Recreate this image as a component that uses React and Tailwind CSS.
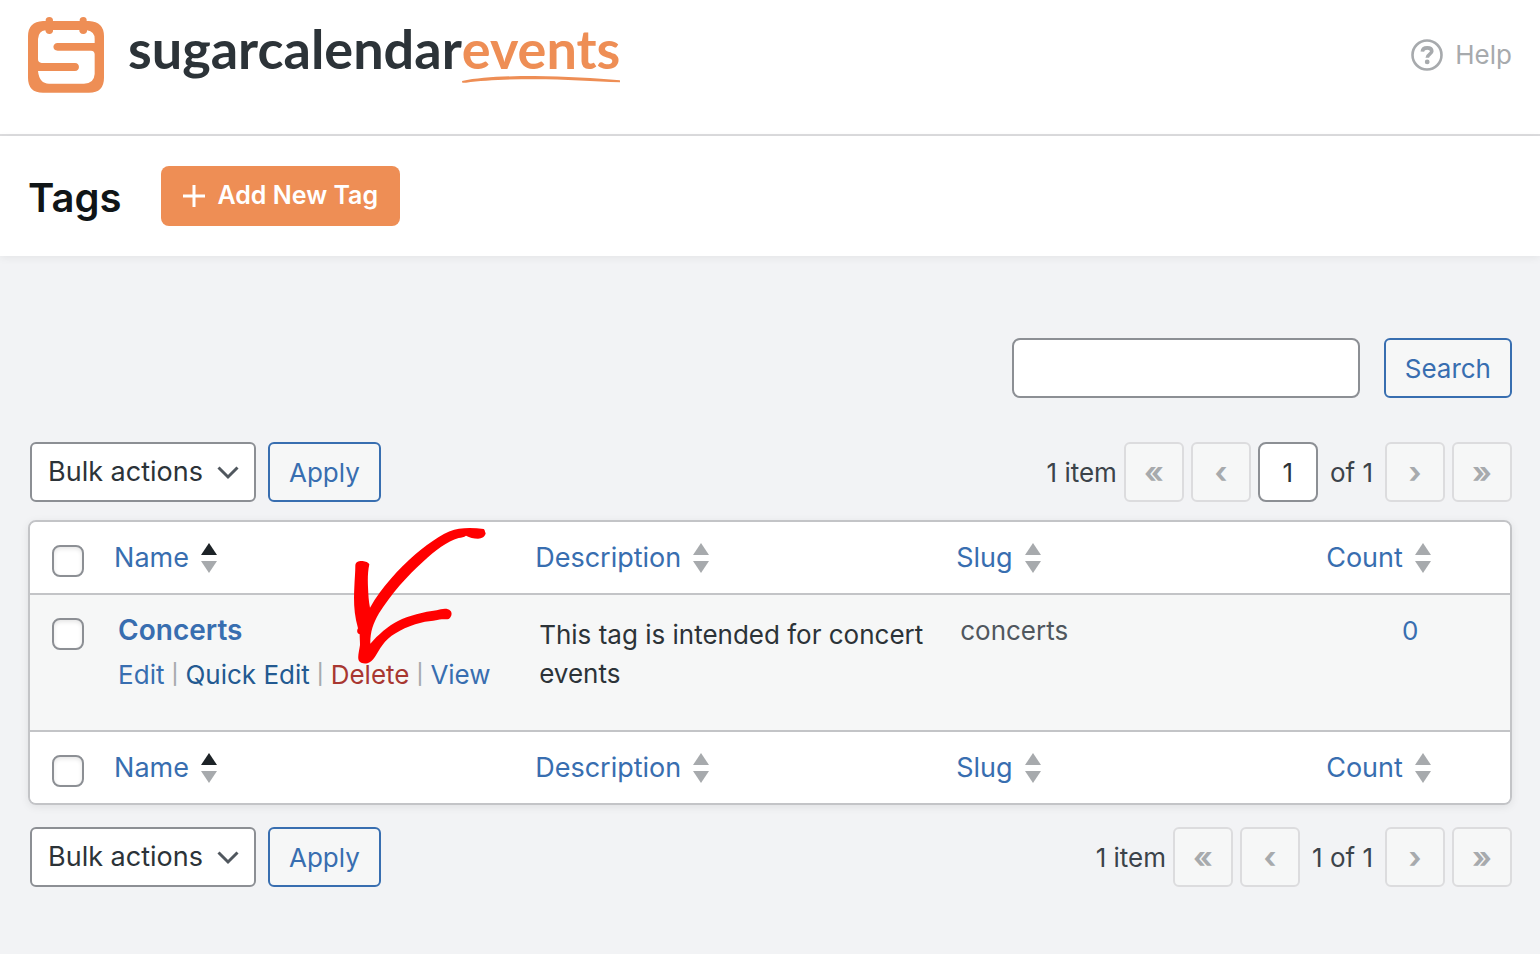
import React from "react";

function LogoMark() {
  return (
    <svg viewBox="54 51 228 228" className="h-[76px] w-[76px] shrink-0" aria-hidden="true">
      <path
        fill="#ee8e55"
        d="M99 63H107C106 55 111 51 118 51C125 51 130 55 129 63H209C208 55 213 51 220 51C227 51 231 55 230 63H237Q282 65 282 109V233Q282 278 237 278H99Q54 278 54 233V109Q54 65 99 63Z"
      />
      <path
        fill="#fff"
        d="M106 91C107 98 111 102 118 102C126 102 130 97 129 90H208C207 97 212 102 220 102C227 102 232 98 231 91Q254 94 254 117V129H143C126 129 126 152 143 152H243Q254 153 254 163V222Q252 251 222 251H117Q88 251 84 213H195C211 213 211 189 195 189H95Q84 188 84 178V117Q86 93 106 91Z"
      />
    </svg>
  );
}

function SortArrows({ active }) {
  return (
    <svg viewBox="0 0 16 30" className="h-[30px] w-4 shrink-0" aria-hidden="true">
      <path d="M8 0L16 12H0Z" fill={active ? "#1d2327" : "#a7aaad"} />
      <path d="M0 18H16L8 30Z" fill="#a7aaad" />
    </svg>
  );
}

function Check({ label }) {
  return (
    <input
      type="checkbox"
      aria-label={label}
      className="block h-8 w-8 appearance-none rounded-lg border-2 border-[#8c8f94] bg-white shadow-[inset_0_2px_4px_rgba(0,0,0,0.1)]"
    />
  );
}

function OutlineButton({ children }) {
  return (
    <button
      type="button"
      className="h-[60px] rounded-md border-2 border-[#386eb0] bg-[#f6f7f7] px-[19px] text-[26px] text-[#386eb0]"
    >
      {children}
    </button>
  );
}

function BulkActions({ label }) {
  return (
    <div className="flex gap-3 pl-0.5">
      <div className="relative">
        <select
          aria-label={label}
          className="h-[60px] w-[226px] appearance-none rounded-md border-2 border-[#8c8f94] bg-white pl-4 text-[27px] text-[#2c3338]"
        >
          <option>Bulk actions</option>
          <option>Delete</option>
        </select>
        <svg
          viewBox="0 0 22 14"
          className="pointer-events-none absolute top-6 right-[17px] h-3.5 w-[22px]"
          fill="none"
          stroke="#50575e"
          strokeWidth="3"
          aria-hidden="true"
        >
          <path d="M1.5 1.5L11 11L20.500 1.5" />
        </svg>
      </div>
      <OutlineButton>Apply</OutlineButton>
    </div>
  );
}

function PageButton({ label, children }) {
  return (
    <button
      type="button"
      disabled
      aria-label={label}
      className="h-[60px] w-[60px] rounded-md border-2 border-[#dcdcde] bg-[#f6f7f7] text-[30px] leading-none font-bold text-[#a7aaad]"
    >
      {children}
    </button>
  );
}

function Pagination({ editable }) {
  return (
    <nav aria-label="Pagination" className="flex items-center gap-[7px] text-[26px] text-[#3c434a]">
      <span>1 item</span>
      <PageButton label="First page">«</PageButton>
      <PageButton label="Previous page">‹</PageButton>
      {editable && (
        <input
          type="text"
          aria-label="Current page"
          defaultValue="1"
          className="h-[60px] w-[60px] rounded-lg border-2 border-[#8c8f94] bg-white text-center text-[26px] text-[#2c3338]"
        />
      )}
      <span className="px-[5px]">{editable ? "of 1" : "1 of 1"}</span>
      <PageButton label="Next page">›</PageButton>
      <PageButton label="Last page">»</PageButton>
    </nav>
  );
}

const columns = ["Name", "Description", "Slug", "Count"];

function HeadingRow({ edge, label }) {
  return (
    <tr className="bg-white">
      <td className={`${edge} border-[#c3c4c7] pt-[23px] pb-4 pl-[22px] align-top`}>
        <Check label={label} />
      </td>
      {columns.map((name) => (
        <th key={name} scope="col" className={`${edge} border-[#c3c4c7] px-4 py-4 text-left align-top font-normal`}>
          <a href="#sort" className="flex items-center gap-3 text-[27px] leading-[39px] text-[#386eb0]">
            {name}
            <SortArrows active={name === "Name"} />
          </a>
        </th>
      ))}
    </tr>
  );
}

function Arrow() {
  return (
    <svg
      viewBox="99 51 402 411"
      className="pointer-events-none absolute top-[5px] left-[323px] h-[137px] w-[134px]"
      aria-hidden="true"
    >
      <path
        fill="#ff0000"
        d="M106 166C107 155 117 152 128 153C137 154 145 157 148 163C143 187 143 209 144 231C145 254 146 273 150 293C185 232 235 178 286 133C333 93 380 61 417 56C442 53 468 54 491 57C495 60 494 64 497 70C495 80 486 86 474 86C461 86 449 82 438 77C432 82 425 82 416 84C381 94 347 120 309 155C262 197 213 252 177 310C158 342 150 371 151 401C174 375 205 347 234 333C265 317 312 306 350 301C364 297 382 293 391 302C397 307 396 321 386 327C377 330 363 325 352 330C336 334 318 334 303 338C256 350 218 370 195 395C174 420 164 449 149 457C138 464 121 461 116 451C112 441 118 420 120 405C120 394 119 385 119 373C110 371 110 361 114 355C101 309 101 269 103 231C104 209 106 188 106 166Z"
      />
    </svg>
  );
}

function Divider() {
  return <span className="text-[20px] font-medium">|</span>;
}

export default function App() {
  return (
    <div className="min-h-screen bg-[#f2f3f5] font-['Inter',sans-serif]">
      <header className="flex items-start justify-between border-b-2 border-[#dcdcde] bg-white px-7 pt-[17px] pb-[41px]">
        <div className="flex items-start gap-6">
          <LogoMark />
          <div className="flex font-['Lato',sans-serif] text-[54px] leading-[64px] font-bold text-[#2c3338]">
            <span>sugarcalendar</span>
            <span className="relative text-[#ee8e55]">
              events
              <svg
                viewBox="396 227 468 20"
                preserveAspectRatio="none"
                className="absolute top-[59px] left-0 h-[7px] w-full"
                aria-hidden="true"
              >
                <path
                  fill="#ee8e55"
                  d="M396 241C450 231 520 227 610 227C700 228 790 233 862 239L864 245C790 242 700 236 610 236C540 236 460 239 408 246H397Z"
                />
              </svg>
            </span>
          </div>
        </div>
        <a href="#help" className="flex items-center gap-3 pt-[22px] text-[26px] leading-8 text-[#a7aaad]">
          <svg viewBox="0 0 32 32" className="h-8 w-8" fill="none" stroke="#a7aaad" aria-hidden="true">
            <circle cx="16" cy="16" r="14.500" strokeWidth="2.600" />
            <path d="M11.300 12.600C11.600 10 13.600 8.900 16.200 8.900C18.900 8.900 20.800 10.200 20.800 12.300C20.800 15.200 16.300 15.200 16.300 18.800" strokeWidth="3.600" />
            <circle cx="16.200" cy="22.900" r="2.400" fill="#a7aaad" stroke="none" />
          </svg>
          Help
        </a>
      </header>

      <div className="flex items-center gap-10 bg-white px-7 py-[30px] shadow-[0_2px_8px_rgba(0,0,0,0.06)]">
        <h1 className="pt-1 text-[40px] leading-[56px] font-semibold text-[#101517]">Tags</h1>
        <button
          type="button"
          className="flex h-[60px] items-center gap-3 rounded-lg bg-[#ee8e55] px-[22px] text-[25px] font-semibold text-white"
        >
          <svg viewBox="0 0 22 22" className="h-[22px] w-[22px]" stroke="#fff" strokeWidth="3" aria-hidden="true">
            <path d="M11 0V22M0 11H22" />
          </svg>
          Add New Tag
        </button>
      </div>

      <main className="px-7 pt-[82px] pb-12">
        <form className="flex justify-end gap-6" onSubmit={(e) => e.preventDefault()}>
          <input
            type="search"
            aria-label="Search tags"
            className="h-[60px] w-[348px] rounded-lg border-2 border-[#8c8f94] bg-white px-4 text-[27px]"
          />
          <OutlineButton>Search</OutlineButton>
        </form>

        <div className="mt-11 flex justify-between">
          <BulkActions label="Bulk actions above the table" />
          <Pagination editable />
        </div>

        <div className="relative mt-[18px] rounded-lg border-2 border-[#c3c4c7] shadow-[0_2px_8px_rgba(0,0,0,0.08)]">
          <div className="overflow-hidden rounded-md">
            <table className="w-full table-fixed border-separate border-spacing-0">
              <colgroup>
                <col />
                <col className="w-[28.45%]" />
                <col className="w-[28.45%]" />
                <col className="w-[25%]" />
                <col className="w-[13.5%]" />
              </colgroup>
              <thead>
                <HeadingRow edge="border-b-2" label="Select all" />
              </thead>
              <tbody>
                <tr className="bg-[#f6f7f7] align-top text-[26px] leading-[39px]">
                  <td className="pt-[23px] pl-[22px]">
                    <Check label="Select Concerts" />
                  </td>
                  <td className="h-[135px] pt-4 pl-5">
                    <a href="#concerts" className="text-[28px] font-semibold text-[#386eb0]">
                      Concerts
                    </a>
                    <div className="mt-[5px] flex gap-[7px] whitespace-nowrap text-[#a7aaad]">
                      <a href="#edit" className="text-[#386eb0]">Edit</a>
                      <Divider />
                      <button type="button" className="text-[#235a91]">Quick Edit</button>
                      <Divider />
                      <a href="#delete" className="text-[#a83731]">Delete</a>
                      <Divider />
                      <a href="#view" className="text-[#386eb0]">View</a>
                    </div>
                  </td>
                  <td className="pt-5 pl-5 text-[#2c3338]">This tag is intended for concert events</td>
                  <td className="pt-4 pl-5 text-[#50575e]">concerts</td>
                  <td className="px-5 pt-4 text-center">
                    <a href="#count" className="text-[#386eb0]">0</a>
                  </td>
                </tr>
              </tbody>
              <tfoot>
                <HeadingRow edge="border-t-2" label="Select all, bottom" />
              </tfoot>
            </table>
          </div>
          <Arrow />
        </div>

        <div className="mt-[22px] flex justify-between">
          <BulkActions label="Bulk actions below the table" />
          <Pagination />
        </div>
      </main>
    </div>
  );
}
